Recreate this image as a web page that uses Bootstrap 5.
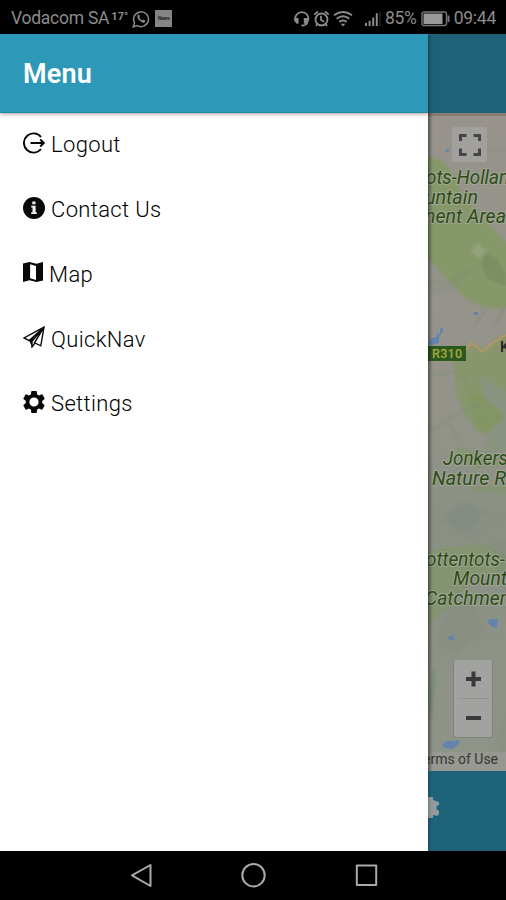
<!DOCTYPE html>
<html lang="en">
<head>
<meta charset="utf-8">
<meta name="viewport" content="width=device-width, initial-scale=1">
<title>Menu</title>
<link href="https://cdn.jsdelivr.net/npm/bootstrap@5.3.0/dist/css/bootstrap.min.css" rel="stylesheet">
<style>
body{font-family:Roboto,"Liberation Sans",sans-serif;width:506px;height:900px;background:#000;color:#111}
svg{display:block;flex:none}
.statusbar{height:34px;padding:3px 10px 0 11px;color:#8b8b8b;font-size:17.5px;letter-spacing:-.25px;white-space:nowrap}
.temp{font-size:11px;font-weight:700;margin-left:2px;width:17px;letter-spacing:.1px;padding-bottom:2px}
.news{width:17px;height:17px;background:#858585;color:#222;font-size:5px;font-weight:700;margin-left:5px;letter-spacing:-.2px}
.screen{height:817px}
.drawer{width:428px;z-index:2;box-shadow:0 0 4px rgba(0,0,0,.45)}
.toolbar{height:79px;background:#2d98b8;color:#fff;padding:3px 0 0 23px;font-size:27px;font-weight:600;letter-spacing:.2px;box-shadow:0 1px 4px rgba(60,30,20,.45);border-bottom:1px solid #1d87a5}
.entries .list-group-item{height:64.75px;padding:0 0 2px 23px;font-size:22px;font-weight:300;color:#000;background:transparent;letter-spacing:.35px;line-height:26px}
.entries span{padding-top:2px}
.entries svg{width:22px;height:22px;margin-right:6px;margin-top:-3px;color:#080808}
.entries svg.narrow{width:20px;height:20px}
.behind{width:78px}
.topshade{height:79px;background:#1f6278}
.tabshade{height:80px;background:#1d637a;padding-top:25px}
.softkeys{height:49px}
.place{font:italic 400 20px Roboto,"Liberation Sans",sans-serif;fill:#2b4c18;stroke:#a3a794;stroke-width:2px;paint-order:stroke;stroke-linejoin:round}
</style>
</head>
<body class="overflow-hidden d-flex flex-column">
<header class="statusbar d-flex align-items-center">
  <span>Vodacom SA</span><span class="temp">17°</span>
  <svg width="18" height="18" viewBox="0 0 18 18" class="ms-1" fill="none" stroke="#8b8b8b"><path d="M1.3 16.8 2.5 12.7A7.4 7.4 0 1 1 5.3 15.6Z" stroke-width="1.5"/><path d="M5.6 5.2q1-1.3 1.8.2l.5 1.2-.7 1q1 2.1 3.1 2.9l1-.9 1.8.9q.8.9-.8 1.9-2 .9-4.8-1.8-2.8-2.8-1.9-5.4Z" fill="#8b8b8b" stroke="none"/></svg>
  <span class="news d-flex align-items-center justify-content-center">News</span>
  <div class="d-flex align-items-center ms-auto">
    <svg width="89" height="20" viewBox="0 0 89 20" fill="none" stroke="#8b8b8b" stroke-width="1.8">
      <path d="M3.200 11A6.700 6.700 0 1 1 16.400 11M15.500 12.500q-.5 4.300-6 4"/><path d="M2.300 9h4.200v5.700H4.700L2.300 12zM11.800 9h5v3l-2.400 2.700h-2.600z" fill="#8b8b8b" stroke="none"/>
      <circle cx="29.500" cy="10.500" r="6"/><path d="M29 6.800V11l3.200 1.800M22.200 5.600 26 2.500M33 2.500l3.800 3.100M25.500 15l-1.700 2M33.500 15l1.700 2"/>
      <path d="M42 6.300q9-6.500 18 0M44.600 9.700q6.400-4.700 12.800 0M47.300 12.900q3.700-2.600 7.400 0" stroke-width="2"/><path d="M48.600 14.700h4.800L51 17.500z" fill="#8b8b8b" stroke="none"/>
      <path d="M74 17v-3M77.600 17v-5.300M81.200 17V8.500M84.800 17V4.300" stroke-width="2"/><path d="M88 3V17" stroke="#333" stroke-width="1"/>
    </svg>
    <span class="ms-1">85%</span>
    <svg width="29" height="16" viewBox="0 0 29 16" class="ms-1" fill="none" stroke="#777"><rect x="1" y="1" width="24.500" height="13.500" rx="2" stroke-width="1.400"/><path d="M2.500 2.500h19v10.500h-19z" fill="#989898" stroke="none"/><path d="M27.500 4.500v6.500" stroke-width="2"/></svg>
    <span class="ms-1">09:44</span>
  </div>
</header>

<main class="screen d-flex">
  <nav class="drawer bg-white d-flex flex-column">
    <div class="toolbar d-flex align-items-center">Menu</div>
    <div class="list-group list-group-flush entries">
      <a class="list-group-item border-0 d-flex align-items-center"><svg viewBox="0 0 22 22" fill="none" stroke="currentColor" stroke-width="1.9"><path d="M18 5A9.600 9.600 0 1 0 18 17M7.500 11H20.500M17.200 7.500l3.600 3.500-3.600 3.500"/></svg><span>Logout</span></a>
      <a class="list-group-item border-0 d-flex align-items-center"><svg viewBox="0 0 22 22"><circle cx="11" cy="11" r="11" fill="currentColor"/><path d="M9.300 4.600h3.200v2.700H9.300zM8.200 8.700h4.400v6.500h1.200V17H8.200v-1.800h1.300v-4.700H8.200z" fill="#eee"/></svg><span>Contact Us</span></a>
      <a class="list-group-item border-0 d-flex align-items-center"><svg class="narrow" viewBox="0 1 20 20"><path d="M0 2.500 6.500 1l7 1.800L20 1v18.400L13.500 21l-7-1.800L0 21z" fill="currentColor"/><path d="M7.100 3.300 13 4.900v14L7.100 17.200z" fill="#fff"/></svg><span>Map</span></a>
      <a class="list-group-item border-0 d-flex align-items-center"><svg viewBox="0 0 22 22" fill="none" stroke="currentColor" stroke-width="1.400"><path d="M21 1.200 1 12l5.200 2.600L21 1.200 17.800 19.800l-6.300-3L21 1.200 9 15.200V21l2.800-3.600"/><path d="M6.200 14.600 13 8.500 9 15.200V21z" fill="currentColor" stroke="none"/></svg><span>QuickNav</span></a>
      <a class="list-group-item border-0 d-flex align-items-center"><svg viewBox="2 2 20 20" fill="currentColor"><path d="M19.430 12.980c.04-.32.07-.64.07-.98s-.03-.66-.07-.98l2.110-1.650c.19-.15.24-.42.12-.64l-2-3.460c-.12-.22-.39-.3-.61-.22l-2.490 1c-.52-.4-1.080-.73-1.690-.98l-.38-2.650C14.460 2.180 14.250 2 14 2h-4c-.25 0-.46.18-.49.42l-.38 2.650c-.61.25-1.170.59-1.690.98l-2.490-1c-.23-.09-.49 0-.61.22l-2 3.460c-.13.22-.07.49.12.64l2.110 1.650c-.04.32-.07.65-.07.98s.03.66.07.98l-2.110 1.650c-.19.15-.24.42-.12.64l2 3.460c.12.22.39.3.61.22l2.490-1c.52.4 1.080.73 1.690.98l.38 2.650c.03.24.24.42.49.42h4c.25 0 .46-.18.49-.42l.38-2.650c.61-.25 1.170-.59 1.690-.98l2.490 1c.23.09.49 0 .61-.22l2-3.460c.12-.22.07-.49-.12-.64zM12 16.200a4.200 4.200 0 1 1 0-8.400 4.200 4.200 0 0 1 0 8.400z"/></svg><span>Settings</span></a>
    </div>
  </nav>

  <section class="behind d-flex flex-column overflow-hidden">
    <div class="topshade"></div>
    <svg width="78" height="658" viewBox="428 113 78 658">
      <defs>
        <linearGradient id="land" x1="0" y1="0" x2="0" y2="1"><stop offset="0" stop-color="#97938c"/><stop offset=".45" stop-color="#94938a"/><stop offset=".62" stop-color="#8a9084"/><stop offset="1" stop-color="#8f9488"/></linearGradient>
        <linearGradient id="edge"><stop offset="0" stop-opacity=".3"/><stop offset="1" stop-opacity="0"/></linearGradient>
        <filter id="soft" x="-20%" y="-20%" width="140%" height="140%"><feGaussianBlur stdDeviation="1.200"/></filter>
      </defs>
      <path d="M428 113h78v658h-78z" fill="url(#land)"/>
      <g filter="url(#soft)">
        <path d="M424 156q16 0 26 14l14 28 22 24 12 12 12 12v62h-24q-24-8-40-30l-24-26z" fill="#869869"/>
        <path d="M484 252l12 6 10 16v12l-20-8-4-12z" fill="#7b8f63"/>
        <path d="M478 243l9 8-8 8-9-8z" fill="#93a27c"/>
        <path d="M452 348l14-3 20 2 24-18v62l-14 6-10 32-8 4-12-16-10-22z" fill="#859769" opacity=".9"/>
        <path d="M480 377l12 4 18 18v60h-28l8-34z" fill="#8a9380"/>
        <path d="M468 396l12-2 14 12 12 10-8 8-14 12-8-14z" fill="#81955f" opacity=".8"/>
        <path d="M456 446l24 8h26v10l-26 4-24-10zM466 486h40v8l-32-2z" fill="#82946a" opacity=".65"/>
        <path d="M424 552l32-6 28-2 22 12v16l-30 2-28 34-24 20z" fill="#82946b" opacity=".8"/>
        <path d="M428 282l18 2 20-14 6-2-16 18-28 6zM428 376l26-4 14 12M428 432l16-9 20-13 16-5M450 424l10 18M470 505l25 12 11-5M440 518l30 20 15-10" fill="none" stroke="#7c8c7a" stroke-width="3" opacity=".4"/>
        <path d="M506 150h-20M475 325l10-14M495 324l11-20" fill="none" stroke="#818c7e" stroke-width="3" opacity=".5"/>
        <path d="M445 610l23-15 20 35-35 25-15-12zM490 545l16-5v70M428 730l26-20M495 740l11-30v60" fill="#818c7b" opacity=".35"/>
        <path d="M428 700l5-35 3 15-4 40z" fill="#738a70" opacity=".6"/>
        <path d="M444 515l20-14 18 12-10 20-18-6z" fill="#818980" opacity=".6"/>
      </g>
      <path d="M428 359l22 2M466 350l5-7 6 4 5 5 12-10 12-7" fill="none" stroke="#b09769" stroke-width="2.200"/>
      <g fill="#6284ad"><path d="M446 149h3v3h-3zM474 312h4v3h-4zM440 328h3v4l-3 3zM437 334l3-1-1 6h-3zM430 340l4-3 5 1v5l-7 2-4-1zM487 621l4-2h7l-1 9-5-1zM448 637l6-2v6l-5-2zM442 746q4-7 10-5l8-1q-2 8-9 9-5 0-9-3z"/></g>
      <g class="place">
        <text x="426" y="184" textLength="83" lengthAdjust="spacingAndGlyphs">ots-Hollan</text>
        <text x="425" y="204" textLength="53" lengthAdjust="spacingAndGlyphs">untain</text>
        <text x="425" y="223" textLength="81" lengthAdjust="spacingAndGlyphs">nent Area</text>
        <text x="443" y="465" textLength="65" lengthAdjust="spacingAndGlyphs">Jonkers</text>
        <text x="432" y="485" textLength="74" lengthAdjust="spacingAndGlyphs">Nature R</text>
        <text x="426" y="566" textLength="79" lengthAdjust="spacingAndGlyphs">ottentots-</text>
        <text x="453" y="585" textLength="54" lengthAdjust="spacingAndGlyphs">Mount</text>
        <text x="425" y="605" textLength="85" lengthAdjust="spacingAndGlyphs">Catchmen</text>
      </g>
      <path d="M428 346h38v15h-38z" fill="#2b5a20"/>
      <text x="432" y="358" font-size="12.500" font-weight="500" fill="#aaa93e" textLength="30">R310</text>
      <text x="500" y="352" font-size="15" font-weight="500" fill="#222">K</text>
      <rect x="452" y="127" width="35" height="35" rx="2" fill="#a1a09d"/>
      <path d="M460.500 141v-5.500h6M473.500 135.500h6v5.500M479.500 148.500v6h-6M466.500 154.500h-6v-6" fill="none" stroke="#454545" stroke-width="3"/>
      <rect x="453" y="660" width="40" height="78" rx="2" fill="#777b73" opacity=".6"/>
      <rect x="454" y="660" width="38" height="77" rx="2" fill="#a2a2a0"/>
      <path d="M458 698.500h31" stroke="#929290"/>
      <path d="M466 679h15M473.500 671.500v15M466 718h15" stroke="#3a3a3a" stroke-width="4"/>
      <path d="M428 752h78v19h-78z" fill="#9b9b97" opacity=".6"/>
      <text x="423" y="764" font-size="14" fill="#373735" textLength="75" lengthAdjust="spacingAndGlyphs">erms of Use</text>
      <path d="M428 113h78v3h-78z" fill="#806a63" opacity=".55"/>
      <path d="M428 113h5v658h-5z" fill="url(#edge)"/>
    </svg>
    <div class="tabshade">
      <svg width="12" height="23" viewBox="0 0 12 23"><path d="M0 1h5v3l3 1 3 1v3L8.500 10v3l2.500 2v3l-2 2-4-1v3H0z" fill="#929b9d"/></svg>
    </div>
  </section>
</main>

<footer class="softkeys d-flex justify-content-center">
  <svg width="506" height="49" viewBox="0 851 506 49" fill="none" stroke="#aaa" stroke-width="2" stroke-linejoin="round"><path d="M150.500 865v21L132 875.300z"/><circle cx="253.500" cy="875.200" r="11.200"/><path d="M356.800 865.400h19.400v19.600h-19.400z"/></svg>
</footer>
<script src="https://cdn.jsdelivr.net/npm/bootstrap@5.3.0/dist/js/bootstrap.bundle.min.js"></script>
</body>
</html>
